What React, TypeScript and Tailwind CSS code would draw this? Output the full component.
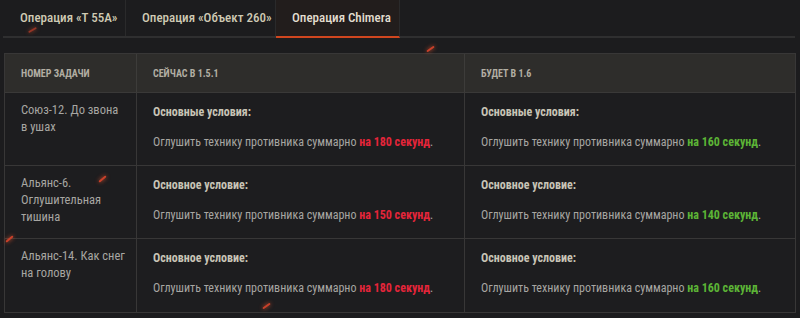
import React from 'react';

const font = { fontFamily: "'Roboto Condensed', 'Liberation Sans Narrow', 'DejaVu Sans Condensed', Roboto, sans-serif" };

type Row = {
  name: string[];
  label: string;
  now: string;
  next: string;
};

const rows: Row[] = [
  { name: ['Союз-12. До звона', 'в ушах'], label: 'Основные условия:', now: 'на 180 секунд', next: 'на 160 секунд' },
  { name: ['Альянс-6.', 'Оглушительная', 'тишина'], label: 'Основное условие:', now: 'на 150 секунд', next: 'на 140 секунд' },
  { name: ['Альянс-14. Как снег', 'на голову'], label: 'Основное условие:', now: 'на 180 секунд', next: 'на 160 секунд' },
];

const Cell: React.FC<{ label: string; value: string; color: string; last?: boolean }> = ({ label, value, color, last }) => (
  <div className={`px-4 pt-[11px] ${last ? '' : 'border-r border-[#383737]'}`}>
    <p className="text-[12px] font-bold text-[#c8c4b6] leading-[17px]">{label}</p>
    <p className="mt-[13px] text-[12px] text-[#a7a6a2] leading-[17px] whitespace-nowrap">
      Оглушить технику противника суммарно <span className={`font-bold ${color}`}>{value}</span>.
    </p>
  </div>
);

const Spark: React.FC<{ className: string }> = ({ className }) => (
  <span className={`absolute h-[2px] w-[9px] rounded-full bg-[#c9402a] shadow-[0_0_4px_#e0542f] ${className}`} />
);

export default function App() {
  return (
    <div className="relative w-[800px] h-[318px] overflow-hidden bg-[#1c1c1e]" style={font}>
      <div className="flex h-[38px] ml-[3px] mr-[5px] border-b-2 border-[#2f2f30]">
        <div className="w-[123px] border-r border-[#2a2a2b] pl-[17px] flex items-center text-[13px] font-medium text-[#cfcab4]">
          Операция «Т 55А»
        </div>
        <div className="w-[150px] border-r border-[#2a2a2b] pl-[16px] flex items-center text-[13px] font-medium text-[#cfcab4]">
          Операция «Объект 260»
        </div>
        <div className="w-[124px] border-r border-[#2a2a2b] border-b-2 border-b-[#d0461f] -mb-[2px] bg-[#221d1c] pl-[16px] flex items-center text-[13px] font-medium text-[#e2ddd0]">
          Операция Chimera
        </div>
      </div>

      <div className="mt-[15px] mx-[4px] border border-[#383737]">
        <div className="grid grid-cols-[132px_328px_1fr] h-[39px] bg-[#2e2d2b] border-b border-[#3a3938] text-[10px] font-bold uppercase text-[#b2aea3]">
          <div className="border-r border-[#3d3c3a] pl-4 flex items-center">Номер задачи</div>
          <div className="border-r border-[#3d3c3a] pl-4 flex items-center">Сейчас в 1.5.1</div>
          <div className="pl-4 flex items-center">Будет в 1.6</div>
        </div>
        {rows.map((r, i) => (
          <div
            key={i}
            className={`grid grid-cols-[132px_328px_1fr] h-[73px] bg-[#1d1d1f] ${i < rows.length - 1 ? 'border-b border-[#383737]' : ''}`}
          >
            <div className="border-r border-[#383737] pl-4 pr-1 pt-[8px] text-[12.5px] leading-[17px] text-[#a7a6a2]">
              {r.name.map((line, j) => (
                <div key={j} className="whitespace-nowrap">{line}</div>
              ))}
            </div>
            <Cell label={r.label} value={r.now} color="text-[#e5253a]" />
            <Cell label={r.label} value={r.next} color="text-[#5cb436]" last />
          </div>
        ))}
      </div>

      <Spark className="left-[28px] top-[29px] -rotate-[30deg] opacity-70" />
      <Spark className="left-[426px] top-[48px] -rotate-[35deg]" />
      <Spark className="left-[98px] top-[178px] -rotate-[40deg]" />
      <Spark className="left-[5px] top-[238px] -rotate-[40deg]" />
      <Spark className="left-[262px] top-[305px] -rotate-[35deg]" />
    </div>
  );
}
